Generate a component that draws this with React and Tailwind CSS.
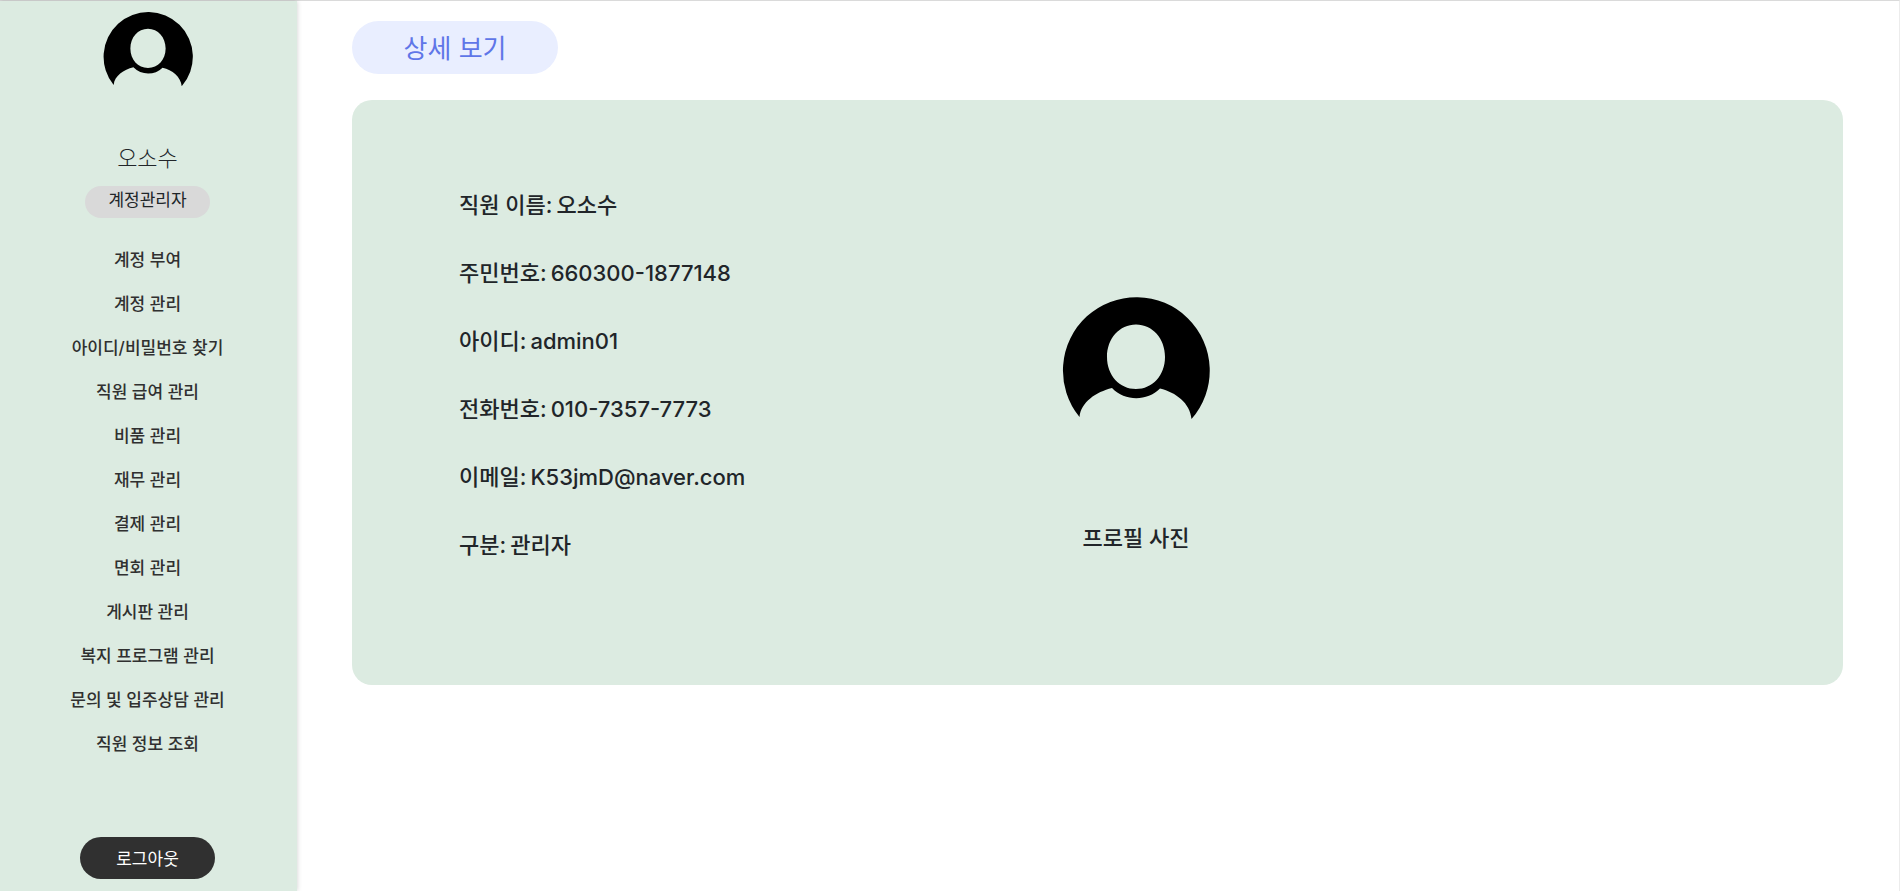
const menu = [
  '계정 부여',
  '계정 관리',
  '아이디/비밀번호 찾기',
  '직원 급여 관리',
  '비품 관리',
  '재무 관리',
  '결제 관리',
  '면회 관리',
  '게시판 관리',
  '복지 프로그램 관리',
  '문의 및 입주상담 관리',
  '직원 정보 조회',
];

const details = [
  ['직원 이름', '오소수'],
  ['주민번호', '660300-1877148'],
  ['아이디', 'admin01'],
  ['전화번호', '010-7357-7773'],
  ['이메일', 'K53jmD@naver.com'],
  ['구분', '관리자'],
];

function Avatar({ className }) {
  return (
    <svg viewBox="0 0 148 124" className={className} role="img" aria-label="프로필 사진">
      <path
        fill="#000"
        fillRule="evenodd"
        d="M17.5 120 A73.4 73.4 0 1 1 129.5 122 C128 106 114 95.5 98 91.500 C85 104.500 63 104.500 50 91 C34 95 19 105 17.5 120 Z M74 27.500 C57.500 27.500 45 41.500 45 60 C45 78.500 57.500 92 74 92 C90.500 92 103 78.500 103 60 C103 41.500 90.500 27.500 74 27.500 Z"
      />
    </svg>
  );
}

function Sidebar() {
  return (
    <aside className="z-10 flex w-[297px] shrink-0 flex-col items-center bg-[#dcebe1] pt-[11px] pr-[2px] pb-3 shadow-[0_0_5px_rgba(0,0,0,0.2)]">
      <Avatar className="w-[90px]" />
      <p className="mt-[55px] text-[22px] leading-8 font-light text-[#212529]">오소수</p>
      <p className="mt-3 h-8 rounded-full bg-[#d9d9d9] px-[23px] text-[17px] leading-7 text-[#212529]">
        계정관리자
      </p>
      <nav className="mt-5">
        <ul className="text-center text-[17px] leading-[44px] font-medium text-[#303030]">
          {menu.map((item) => (
            <li key={item}>
              <a href="#">{item}</a>
            </li>
          ))}
        </ul>
      </nav>
      <button
        type="button"
        className="mt-auto h-[42px] w-[135px] rounded-full bg-[#303030] pt-px text-[17px] leading-6 text-white"
      >
        로그아웃
      </button>
    </aside>
  );
}

export default function App() {
  return (
    <div className="flex min-h-screen border-t border-r border-t-[#dadada] border-r-[#ececec] bg-white font-['Inter','Noto_Sans_CJK_KR',sans-serif]">
      <Sidebar />
      <main className="flex-1 pt-5 pr-14 pl-[55px]">
        <h1 className="flex h-[53px] w-[206px] items-center justify-center rounded-full bg-[#e9eeff] pt-[2px] text-[26px] leading-10 text-[#5f76e8]">
          상세 보기
        </h1>
        <section className="mt-[26px] flex rounded-[20px] bg-[#dcebe1] px-[107px] pt-[89px] pb-[124px] text-[22px] font-medium text-[#212529]">
          <dl className="flex basis-[603px] flex-col gap-9 leading-8">
            {details.map(([label, value]) => (
              <div key={label} className="flex gap-1">
                <dt>{label}:</dt>
                <dd>{value}</dd>
              </div>
            ))}
          </dl>
          <figure className="flex flex-col items-center pt-[108px]">
            <Avatar className="w-[148px]" />
            <figcaption className="mt-[101px] leading-8">프로필 사진</figcaption>
          </figure>
        </section>
      </main>
    </div>
  );
}
